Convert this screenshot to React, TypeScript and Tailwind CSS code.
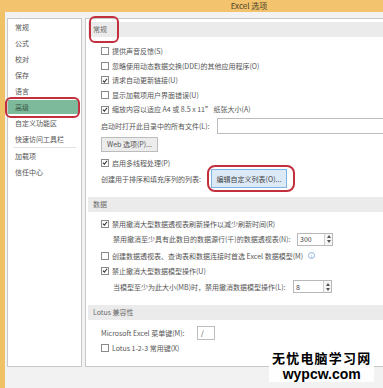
import React from "react";

const FONT = { fontFamily: '"Noto Sans CJK SC", "Noto Sans", sans-serif' };

function Box({ checked }: { checked?: boolean }) {
  return (
    <span className="w-[8px] h-[8px] border border-[#8a8a8a] bg-white flex items-center justify-center shrink-0">
      {checked ? (
        <svg width="7" height="7" viewBox="0 0 8 8">
          <path d="M1.2 4.2 L3.2 6.2 L6.8 1.6" fill="none" stroke="#333" strokeWidth="1.4" />
        </svg>
      ) : null}
    </span>
  );
}

function Check({ label, checked, h = "h-[14.6px]", extra }: { label: string; checked?: boolean; h?: string; extra?: React.ReactNode }) {
  return (
    <div className={`${h} flex items-center gap-[3px] pl-[15px]`}>
      <Box checked={checked} />
      <span>{label}</span>
      {extra}
    </div>
  );
}

function Header({ label, cls }: { label: string; cls: string }) {
  return (
    <div className={`${cls} h-[15px] ml-[2px] bg-[#ebebeb] flex items-center pl-[5px] text-[#6a6a6a]`}>{label}</div>
  );
}

function Spinner({ value, w }: { value: string; w: string }) {
  return (
    <div className={`${w} h-[13px] border border-[#b8b8b8] bg-white flex`}>
      <span className="flex-1 pl-[2px] flex items-center text-[#444]">{value}</span>
      <span className="w-[8px] border-l border-[#cfcfcf] flex flex-col items-center justify-center gap-[2px] bg-[#f6f6f6]">
        <svg width="4" height="3" viewBox="0 0 4 3"><path d="M0 3 L2 0 L4 3Z" fill="#555" /></svg>
        <svg width="4" height="3" viewBox="0 0 4 3"><path d="M0 0 L2 3 L4 0Z" fill="#555" /></svg>
      </span>
    </div>
  );
}

const NAV = ["常规", "公式", "校对", "保存", "语言", "高级", "自定义功能区", "快速访问工具栏"];

export default function App() {
  return (
    <div className="w-[383px] h-[388px] overflow-hidden relative flex flex-col bg-[#f2f2f2] text-[7px] text-[#555]" style={FONT}>
      <div className="h-[12px] bg-[#f3c46d] flex items-center justify-center pl-[115px] text-[8px] text-[#4a3d28] shrink-0">
        Excel 选项
      </div>
      <div className="flex flex-1">
        <div className="w-[5px] bg-[#f1c265] shrink-0" />
        <div className="flex-1 flex pt-[6px] gap-[3px] pl-[2px]">
          {/* left nav */}
          <div className="w-[75px] h-[349px] border border-[#c8c8c8] bg-white shrink-0">
            {NAV.map((n) => (
              <div key={n} className="h-[16px] py-[1px] pr-[2px]">
                <div className={`h-full flex items-center pl-[7px] ${n === "高级" ? "bg-[#7db99b] text-[#3d5a4a]" : ""}`}>{n}</div>
              </div>
            ))}
            <div className="h-px bg-[#e2e2e2] mx-[5px]" />
            {["加载项", "信任中心"].map((n) => (
              <div key={n} className="h-[16px] flex items-center pl-[7px]">{n}</div>
            ))}
          </div>

          {/* right panel */}
          <div className="flex-1 h-[349px] border border-r-0 border-[#c8c8c8] bg-white">
            <Header label="常规" cls="mt-[3px]" />
            <div className="mt-[7px]">
              <Check label="提供声音反馈(S)" />
              <Check label="忽略使用动态数据交换(DDE)的其他应用程序(O)" />
              <Check label="请求自动更新链接(U)" checked />
              <Check label="显示加载项用户界面错误(U)" />
              <Check label="缩放内容以适应 A4 或 8.5 x 11” 纸张大小(A)" checked />
            </div>
            <div className="mt-[1px] h-[16px] flex items-center pl-[15px]">
              <span className="w-[116px]">启动时打开此目录中的所有文件(L):</span>
              <div className="flex-1 h-[16px] border border-r-0 border-[#bdbdbd] bg-white" />
            </div>
            <div className="mt-[3px] ml-[15px] w-[57px] h-[15px] border border-[#bcbcbc] bg-[#ececec] flex items-center justify-center text-[#555]">
              Web 选项(P)...
            </div>
            <Check label="启用多线程处理(P)" checked h="mt-[5px] h-[12px]" />
            <div className="h-[20px] flex items-center pl-[15px]">
              <span className="w-[110px]">创建用于排序和填充序列的列表:</span>
              <div className="w-[76px] h-[19px] border border-[#7fb3e4] bg-[#dceaf7] flex items-center justify-center text-[#444]">
                编辑自定义列表(O)...
              </div>
            </div>
            <Header label="数据" cls="mt-[8px]" />
            <Check label="禁用撤消大型数据透视表刷新操作以减少刷新时间(R)" checked h="mt-[5px] h-[14px]" />
            <div className="mt-[1px] h-[15px] flex items-center pl-[27px]">
              <span className="w-[184px]">禁用撤消至少具有此数目的数据源行(千)的数据透视表(N):</span>
              <Spinner value="300" w="w-[36px]" />
            </div>
            <Check
              label="创建数据透视表、查询表和数据连接时首选 Excel 数据模型(M)"
              h="mt-[2px] h-[14px]"
              extra={
                <span className="ml-[2px] w-[7px] h-[7px] rounded-full border border-[#8fb4e0] text-[#6f9bd6] text-[5px] leading-none flex items-center justify-center">i</span>
              }
            />
            <Check label="禁止撤消大型数据模型操作(U)" checked h="mt-[1px] h-[14px]" />
            <div className="mt-[2px] h-[14px] flex items-center pl-[27px]">
              <span className="w-[180px]">当模型至少为此大小(MB)时，禁用撤消数据模型操作(L):</span>
              <Spinner value="8" w="w-[39px]" />
            </div>
            <Header label="Lotus 兼容性" cls="mt-[11px]" />
            <div className="mt-[6px] h-[14px] flex items-center pl-[15px]">
              <span className="w-[96px]">Microsoft Excel 菜单键(M):</span>
              <div className="w-[18px] h-[14px] border border-[#bdbdbd] bg-white flex items-center pl-[3px] text-[#444]">/</div>
            </div>
            <Check label="Lotus 1-2-3 常用键(X)" h="mt-[1px] h-[14px]" />
          </div>
        </div>
      </div>

      {/* red annotations */}
      <div className="absolute left-[5px] top-[97px] w-[75px] h-[21px] border-2 border-[#c2303d] rounded-[6px]" />
      <div className="absolute left-[89px] top-[16px] w-[30px] h-[27px] border-2 border-[#c2303d] rounded-[6px]" />
      <div className="absolute left-[207px] top-[165px] w-[88px] h-[27px] border-2 border-[#c2303d] rounded-[8px]" />

      {/* watermark */}
      <div className="absolute left-[269px] top-[348px] px-[3px] bg-white/90 flex flex-col items-center text-black font-bold whitespace-nowrap">
        <span className="block h-[19px] text-[13px] leading-[19px] tracking-[1.2px]">无忧电脑学习网</span>
        <span className="block h-[16px] text-[14px] leading-[16px] -mt-[1px]" style={{ fontFamily: '"Liberation Sans", sans-serif' }}>wypcw.com</span>
      </div>
    </div>
  );
}
